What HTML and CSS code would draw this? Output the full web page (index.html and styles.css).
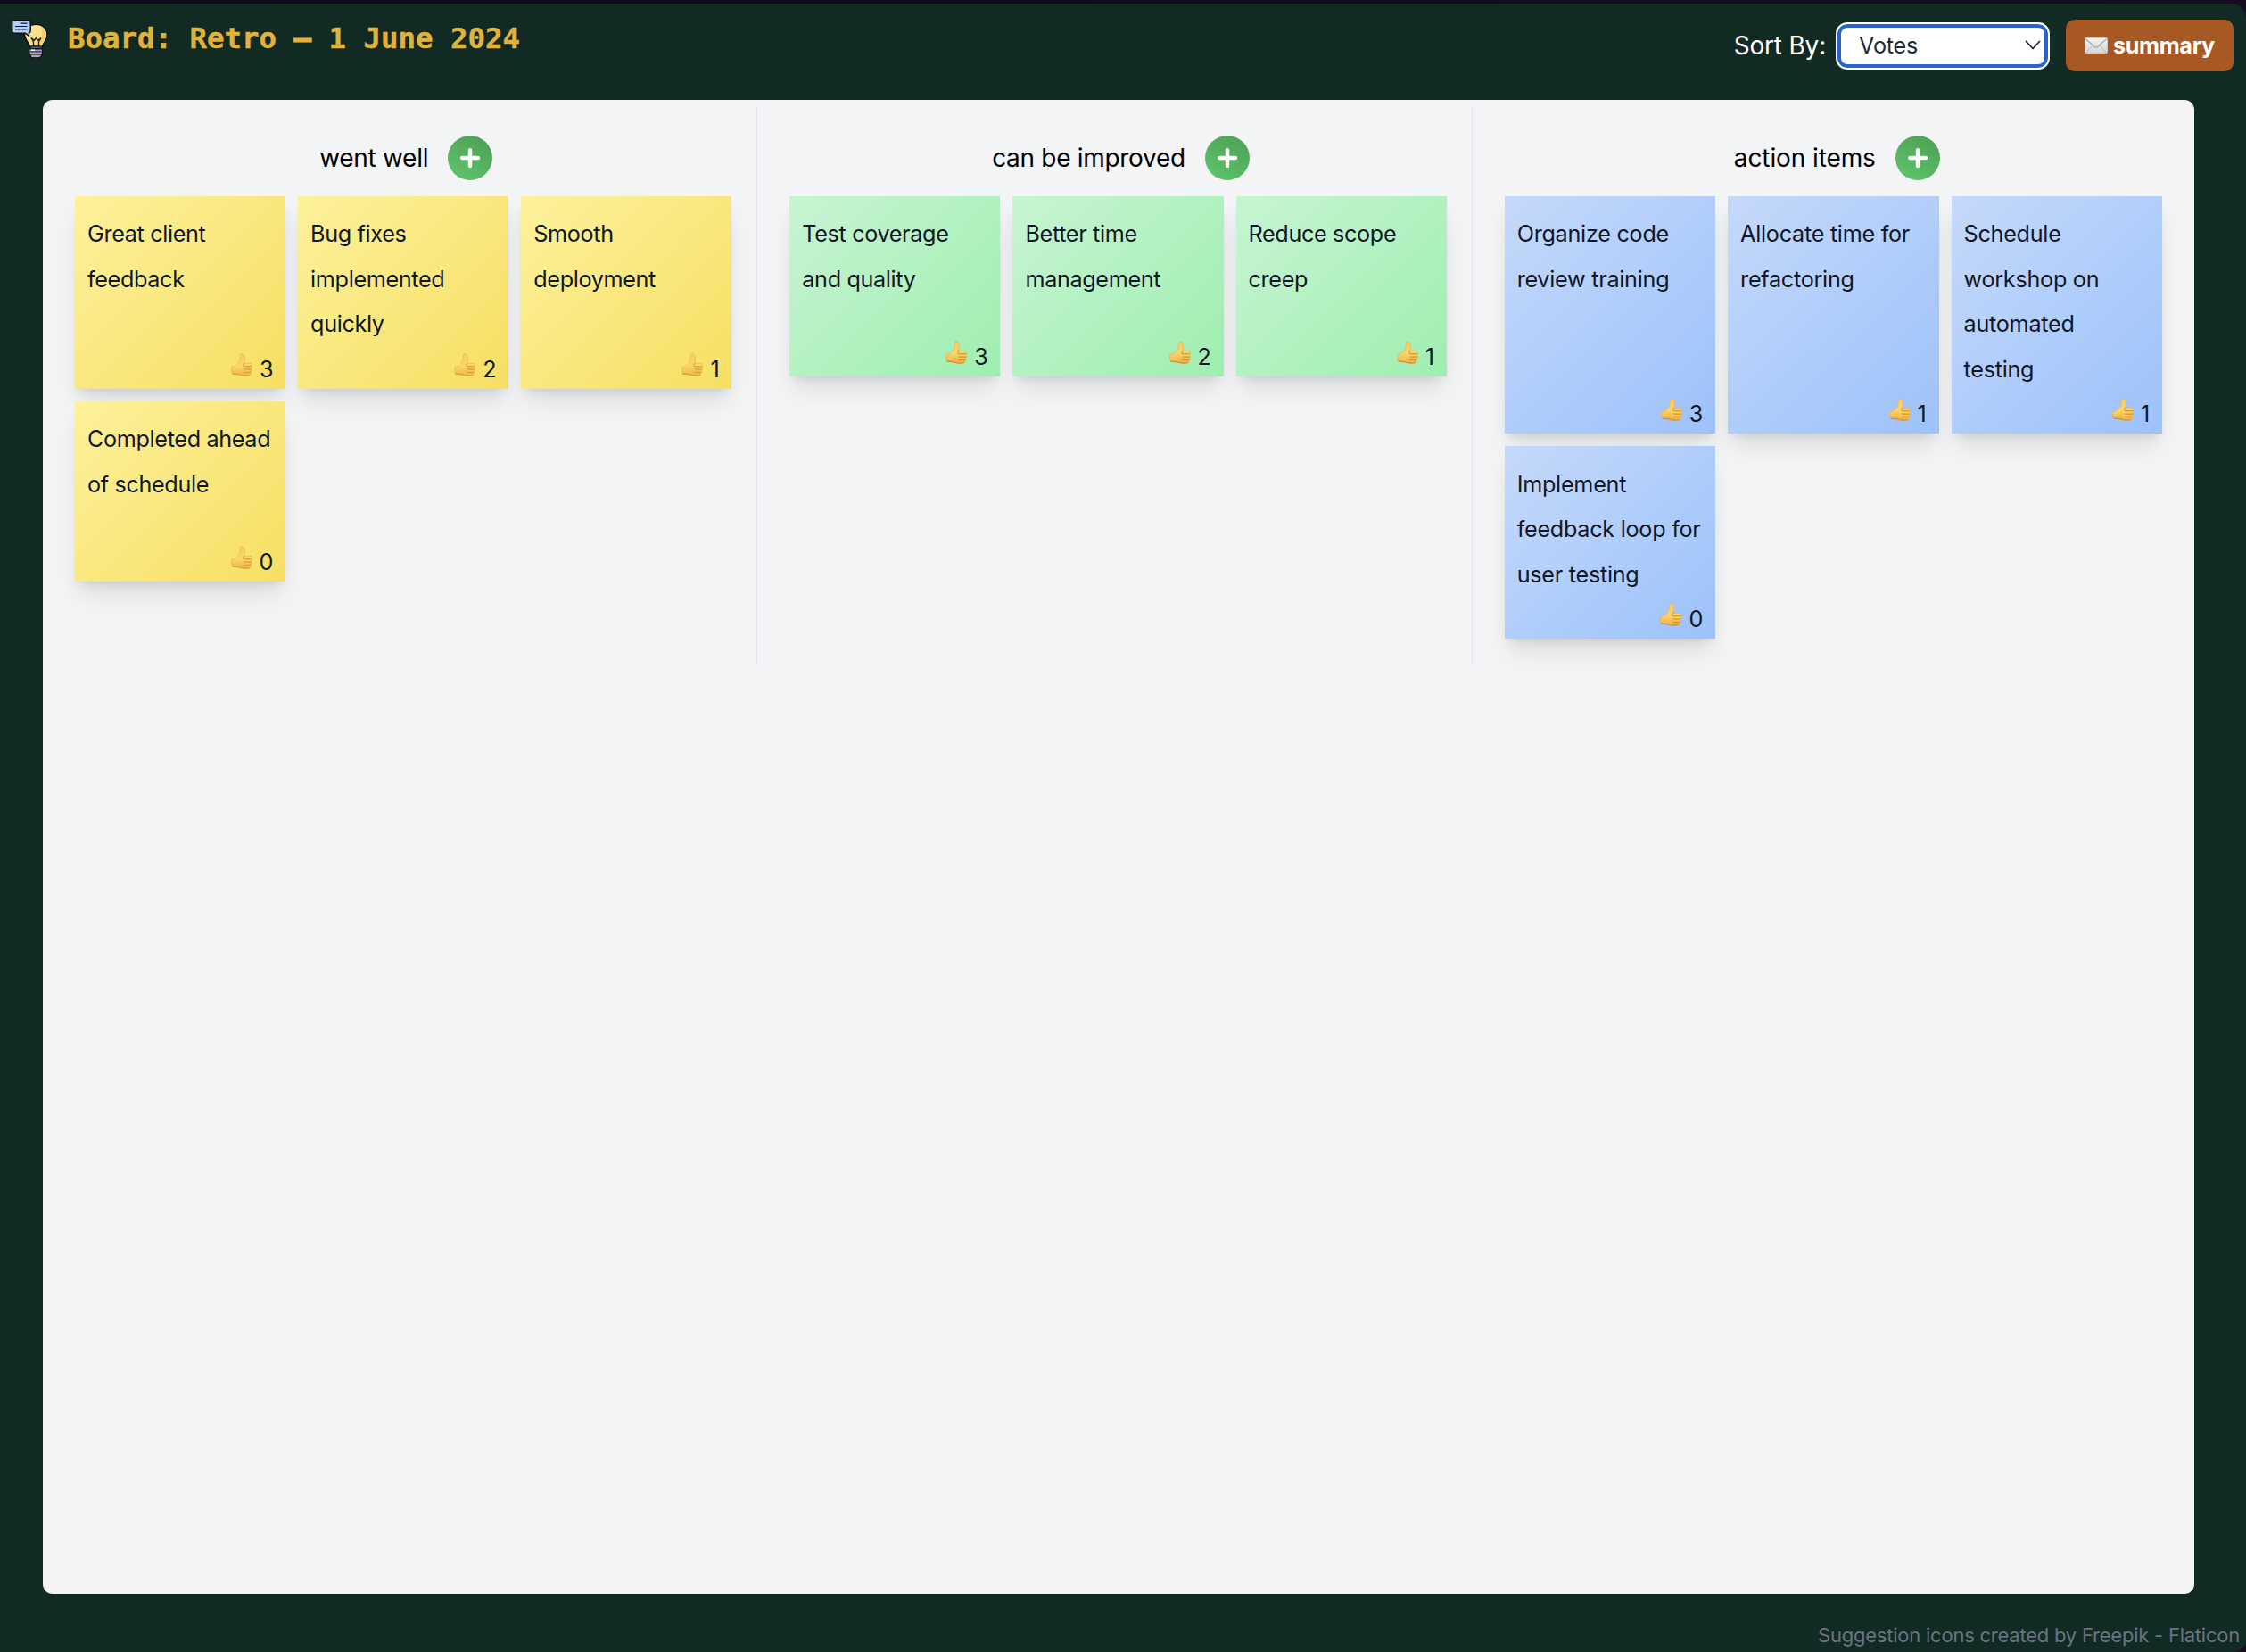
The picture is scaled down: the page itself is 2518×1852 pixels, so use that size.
FILE: index.html
```html
<!DOCTYPE html>
<html lang="en">
<head>
<meta charset="utf-8">
<title>Board: Retro – 1 June 2024</title>
<link rel="stylesheet" href="styles.css">
</head>
<body>
<svg class="sprite" width="0" height="0" aria-hidden="true">
  <defs>
    <linearGradient id="thumbFill" x1="0" y1="0" x2="0" y2="1">
      <stop offset="0" stop-color="#f8cc62"/>
      <stop offset="0.55" stop-color="#fbd46c"/>
      <stop offset="1" stop-color="#eeb044"/>
    </linearGradient>
    <linearGradient id="plusFill" x1="0.2" y1="1" x2="0.8" y2="0">
      <stop offset="0" stop-color="#5fc36a"/>
      <stop offset="1" stop-color="#4da156"/>
    </linearGradient>
    <linearGradient id="mailFill" x1="0" y1="0" x2="0" y2="1">
      <stop offset="0" stop-color="#f3f3f3"/>
      <stop offset="1" stop-color="#d6d6d6"/>
    </linearGradient>
    <symbol id="thumb" viewBox="0 0 24 26">
      <path fill="url(#thumbFill)" stroke="#e9b04a" stroke-width=".7" d="M1 15.500C3.500 14.900 6 13.900 7.600 12C9.200 10 10.200 7.500 10.300 4.800C10.300 2.500 10.200 .9 12 .8C14.700 .7 15.700 3.500 15.600 6C15.500 8.200 14.900 9.800 14.700 11.300L21.800 11.300C24 11.400 24.100 14.200 22.700 14.700C24.200 15.200 24.100 17.800 22.500 18.100C23.800 18.800 23.500 21.100 21.800 21.400C22.700 22.400 22.200 24.500 20.500 24.700C16.500 25.300 12.500 25.200 9.600 24C7.500 23.100 5 23.600 1.700 23.200C.4 21 .3 17.500 1 15.500Z"/>
      <path fill="none" stroke="#c98a2a" stroke-width="1" stroke-linecap="round" d="M15 14.700H22.600M14.800 18.100H22.500M14.600 21.400H21.800M14.600 11.500C13.300 12.600 13.600 14 14.500 14.700"/>
      <path fill="none" stroke="#d0912f" stroke-width="1.100" stroke-linecap="round" d="M9.600 24C12.500 25.200 16.500 25.300 20.500 24.700M1.700 23.200C5 23.600 7.500 23.100 9.600 24"/>
    </symbol>
    <symbol id="plus" viewBox="0 0 50 50">
      <circle cx="25" cy="25" r="25" fill="url(#plusFill)"/>
      <path stroke="#fff" stroke-width="4.400" stroke-linecap="round" d="M25 16.200V34M16.200 25H34"/>
    </symbol>
  </defs>
</svg>
<div class="app">
  <header class="topbar">
    <div class="brand">
      <svg class="logo" viewBox="0 0 48 44">
        <path d="M27.500 5.300C35 5.300 40 10.500 40 17.300C40 23 35.500 25.500 34.500 30.500H20.500C19.500 25.500 14.500 22.500 14.500 16C14.500 10 20 5.300 27.500 5.300Z" fill="#fbe18f" stroke="#0b0c0c" stroke-width="1.500"/>
        <path d="M32 7C37 9 39.300 13 39 17.500C38.500 22.500 34.500 25 33.800 30H31C32.500 23 36.500 16 32 7Z" fill="#f5cd75"/>
        <path d="M24.500 30V25L22 20.500L25.500 23.200L27.500 20.500L29.500 23.200L33 20.500L30.500 25V30" fill="none" stroke="#2b2615" stroke-width="1.400"/>
        <rect x="21" y="29.800" width="13" height="3" rx="1" fill="#3d4fa8" stroke="#0b0c0c"/>
        <path d="M19.700 32.800H34.600V38L33.400 39.500V41L31.500 42.800H22.800L21 41V39.500L19.700 38Z" fill="#a6a5b8" stroke="#0b0c0c" stroke-width="1.200"/>
        <path d="M20.300 35.800H34M21 39.200H33.400" stroke="#343242" stroke-width="1.300"/>
        <rect x="22" y="33.500" width="4" height="1.500" fill="#fff"/>
        <path d="M3 .8H18.800Q21.200 .8 21.200 3.200V12.500Q21.200 14.300 19.400 14.900V18.500L15.500 15.200H3Q.7 15.200 .7 12.900V3.100Q.7 .8 3 .8Z" fill="#b5cbf8" stroke="#0b0c0c" stroke-width="1.500"/>
        <path d="M9.500 4.200H17.500M4 7.500H17.500M4 10.800H17.500" stroke="#0e1735" stroke-width="1.200"/>
      </svg>
      <h1 class="title">Board: Retro <span class="dash">–</span> 1 June 2024</h1>
    </div>
    <div class="actions">
      <label class="sort-label">Sort By:</label>
      <div class="select">
        <span>Votes</span>
        <svg class="chevron" viewBox="0 0 18 12"><path d="M1.500 1.500L9 9.500L16.500 1.500" fill="none" stroke="#1f2937" stroke-width="1.800" stroke-linecap="round" stroke-linejoin="round"/></svg>
      </div>
      <button class="summary">
        <svg class="mail" viewBox="0 0 26 18">
          <rect x=".5" y=".5" width="25" height="17" rx="1.200" fill="url(#mailFill)" stroke="#c4c4c4"/>
          <path d="M1.500 16.800L9.800 8.500M24.500 16.800L16.200 8.500" stroke="#bcbcbc" fill="none"/>
          <path d="M1.200 1.500L11 10.300Q13 12 15 10.300L24.800 1.500" stroke="#a9a9a9" stroke-width="1.200" fill="none"/>
        </svg>
        <span>summary</span>
      </button>
    </div>
  </header>
  <main class="board">
    <section class="column">
      <div class="column-head"><h2>went well</h2><svg class="add"><use href="#plus"/></svg></div>
      <div class="notes yellow">
        <article class="note"><p>Great client feedback</p><div class="votes"><svg class="thumb"><use href="#thumb"/></svg><span>3</span></div></article>
        <article class="note"><p>Bug fixes implemented quickly</p><div class="votes"><svg class="thumb"><use href="#thumb"/></svg><span>2</span></div></article>
        <article class="note"><p>Smooth deployment</p><div class="votes"><svg class="thumb"><use href="#thumb"/></svg><span>1</span></div></article>
        <article class="note"><p>Completed ahead of schedule</p><div class="votes"><svg class="thumb"><use href="#thumb"/></svg><span>0</span></div></article>
      </div>
    </section>
    <section class="column">
      <div class="column-head"><h2>can be improved</h2><svg class="add"><use href="#plus"/></svg></div>
      <div class="notes green">
        <article class="note"><p>Test coverage and quality</p><div class="votes"><svg class="thumb"><use href="#thumb"/></svg><span>3</span></div></article>
        <article class="note"><p>Better time management</p><div class="votes"><svg class="thumb"><use href="#thumb"/></svg><span>2</span></div></article>
        <article class="note"><p>Reduce scope creep</p><div class="votes"><svg class="thumb"><use href="#thumb"/></svg><span>1</span></div></article>
      </div>
    </section>
    <section class="column">
      <div class="column-head"><h2>action items</h2><svg class="add"><use href="#plus"/></svg></div>
      <div class="notes blue">
        <article class="note"><p>Organize code review training</p><div class="votes"><svg class="thumb"><use href="#thumb"/></svg><span>3</span></div></article>
        <article class="note"><p>Allocate time for refactoring</p><div class="votes"><svg class="thumb"><use href="#thumb"/></svg><span>1</span></div></article>
        <article class="note"><p>Schedule workshop on automated testing</p><div class="votes"><svg class="thumb"><use href="#thumb"/></svg><span>1</span></div></article>
        <article class="note"><p>Implement feedback loop for user testing</p><div class="votes"><svg class="thumb"><use href="#thumb"/></svg><span>0</span></div></article>
      </div>
    </section>
  </main>
  <footer class="credit">Suggestion icons created by Freepik - Flaticon</footer>
</div>
</body>
</html>
```
FILE: styles.css
```css
* { box-sizing: border-box; }
html, body { margin: 0; height: 100%; }
body {
  background: linear-gradient(90deg, #0d0b1b, #190b22);
  padding-top: 4px;
  font-family: Inter, "Liberation Sans", sans-serif;
  overflow: hidden;
}
.sprite { position: absolute; }
h1, h2, p { margin: 0; font-weight: 400; }
.app {
  height: 1848px;
  background: #112b24;
  border-radius: 0 16px 14px 0;
  display: flex;
  flex-direction: column;
}
.topbar {
  height: 108px;
  flex: none;
  display: flex;
  justify-content: space-between;
  align-items: flex-start;
  padding: 18px 14px 0 13px;
}
.brand { display: flex; align-items: flex-start; }
.logo { width: 48px; height: 44px; }
.title {
  margin-left: 15px;
  font: 700 32.400px/40px "DejaVu Sans Mono", monospace;
  color: #e2b33c;
  white-space: pre;
  padding-top: 1px;
  -webkit-text-stroke: 0.400px #e2b33c;
}
.dash { -webkit-text-stroke-width: 1.200px; }
.actions { display: flex; align-items: center; height: 58px; }
.sort-label { color: #fff; font-size: 28px; letter-spacing: -0.200px; margin-right: 11px; }
.select {
  width: 240px;
  height: 53px;
  margin-right: 18px;
  padding: 0 5px 0 20px;
  display: flex;
  align-items: center;
  justify-content: space-between;
  background: #fff;
  border: 2px solid #fff;
  border-radius: 13px;
  box-shadow: inset 0 0 0 4px #2a62cf;
  color: #1f2937;
  font-size: 25.200px;
  letter-spacing: -0.200px;
}
.select span { padding-left: 4px; }
.chevron { width: 18px; height: 12px; margin-right: 3px; }
.summary {
  width: 188px;
  height: 58px;
  border: 0;
  border-radius: 10px;
  background: #a85823;
  color: #fff;
  display: flex;
  align-items: center;
  padding: 0 0 0 21px;
  font: 700 25.200px Inter, sans-serif;
  letter-spacing: -0.350px;
}
.mail { width: 26px; height: 18px; margin-right: 6px; }
.board {
  flex: none;
  width: 2412px;
  height: 1675px;
  margin-left: 48px;
  background: #f3f4f6;
  border-radius: 11px;
  padding: 7px 8px;
  display: grid;
  grid-template-columns: repeat(3, 1fr);
  gap: 8px;
  align-items: start;
}
.column { height: 626px; padding: 29px 28px 28px; border-right: 1px solid #e5e7eb; }
.column:last-child { border-right: 0; }
.column-head {
  height: 72px;
  display: flex;
  justify-content: center;
  padding: 4px 0 0 6px;
}
.column:last-child .column-head { padding-left: 8px; }
.column:last-child h2 { letter-spacing: -0.100px; }
.column-head h2 { font-size: 28px; line-height: 50px; letter-spacing: -0.300px; color: #000; margin-right: 22px; }
.add { width: 50px; height: 50px; }
.notes { display: grid; grid-template-columns: repeat(3, 1fr); gap: 14px; }
.note {
  min-height: 202px;
  padding: 17.300px 14px 4.500px;
  display: flex;
  flex-direction: column;
  justify-content: space-between;
  color: #111827;
  font-size: 25.200px;
  line-height: 50.400px;
  letter-spacing: -0.350px;
  box-shadow: 0 18px 26px -5px rgba(0, 0, 0, .1), 0 7px 10px -5px rgba(0, 0, 0, .1);
}
.blue .note { letter-spacing: -0.270px; }
.yellow .note { background: linear-gradient(135deg, #fdf19b, #f7df62); }
.green .note { background: linear-gradient(135deg, #c7f5d3, #9feeb0); }
.blue .note { background: linear-gradient(135deg, #c5d9fa, #9cc2fa); }
.votes { display: flex; justify-content: flex-end; line-height: 36px; height: 43px; padding-top: 7px; }
.thumb { width: 24px; height: 26px; margin-right: 8px; }
.yellow .thumb { opacity: .85; }
.credit {
  height: 61px;
  padding: 29px 7px 0 0;
  text-align: right;
  font-size: 22px;
  line-height: 34px;
  letter-spacing: -0.230px;
  color: #6b7280;
}
```
